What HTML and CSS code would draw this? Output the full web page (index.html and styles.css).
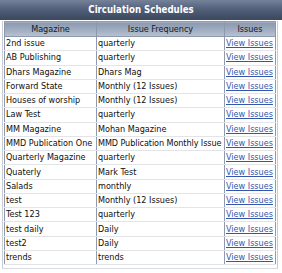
FILE: index.html
```html
<!DOCTYPE html>
<html>
<head>
<meta charset="utf-8">
<link rel="stylesheet" href="styles.css">
</head>
<body>
<div class="panel">
  <div class="title">Circulation Schedules</div>
  <div class="box">
    <table class="grid">
      <thead>
        <tr><th class="c1">Magazine</th><th class="c2">Issue Frequency</th><th class="c3">Issues</th></tr>
      </thead>
      <tbody>
        <tr><td>2nd issue</td><td>quarterly</td><td><a href="#">View Issues</a></td></tr>
        <tr><td>AB Publishing</td><td>quarterly</td><td><a href="#">View Issues</a></td></tr>
        <tr><td>Dhars Magazine</td><td>Dhars Mag</td><td><a href="#">View Issues</a></td></tr>
        <tr><td>Forward State</td><td>Monthly (12 Issues)</td><td><a href="#">View Issues</a></td></tr>
        <tr><td>Houses of worship</td><td>Monthly (12 Issues)</td><td><a href="#">View Issues</a></td></tr>
        <tr><td>Law Test</td><td>quarterly</td><td><a href="#">View Issues</a></td></tr>
        <tr><td>MM Magazine</td><td>Mohan Magazine</td><td><a href="#">View Issues</a></td></tr>
        <tr><td>MMD Publication One</td><td class="tight">MMD Publication Monthly Issue</td><td><a href="#">View Issues</a></td></tr>
        <tr><td>Quarterly Magazine</td><td>quarterly</td><td><a href="#">View Issues</a></td></tr>
        <tr><td>Quaterly</td><td>Mark Test</td><td><a href="#">View Issues</a></td></tr>
        <tr><td>Salads</td><td>monthly</td><td><a href="#">View Issues</a></td></tr>
        <tr><td>test</td><td>Monthly (12 Issues)</td><td><a href="#">View Issues</a></td></tr>
        <tr><td>Test 123</td><td>quarterly</td><td><a href="#">View Issues</a></td></tr>
        <tr><td>test daily</td><td>Daily</td><td><a href="#">View Issues</a></td></tr>
        <tr><td>test2</td><td>Daily</td><td><a href="#">View Issues</a></td></tr>
        <tr><td>trends</td><td>trends</td><td><a href="#">View Issues</a></td></tr>
      </tbody>
    </table>
  </div>
</div>
</body>
</html>
```
FILE: styles.css
```css
html, body {
  margin: 0;
  padding: 0;
  background: #ffffff;
}
.panel {
  width: 282px;
  font-family: "DejaVu Sans Condensed", "DejaVu Sans", sans-serif;
}
.title {
  height: 20px;
  line-height: 20px;
  text-align: center;
  color: #ffffff;
  font-weight: bold;
  font-size: 9.6px;
  background: linear-gradient(#75829a, #52607a 45%, #3a475e);
}
.box {
  margin: 1px 4px 0 2px;
  border-left: 1px solid #c8ccd4;
  border-right: 1px solid #c8ccd4;
  border-bottom: 1px solid #d8dce2;
  height: 247px;
  padding-left: 1px;
}
.grid {
  border-collapse: collapse;
  width: 272px;
  table-layout: fixed;
  font-size: 9px;
  color: #0e0e0e;
}
.grid th {
  height: 14px;
  padding: 0;
  font-weight: normal;
  color: #151a22;
  background: linear-gradient(#8a98af, #a3afc2 60%, #b9c3d2);
  border: 1px solid #8d99ad;
  text-align: center;
}
.c1 { width: 91px; }
.c2 { width: 127px; }
.c3 { width: 50px; }
.grid td {
  height: 13.27px;
  padding: 0 0 0 1px;
  border-left: 1px solid #8e9ab0;
  border-right: 1px solid #8e9ab0;
  border-bottom: 1px solid #e2e4e8;
  white-space: nowrap;
  overflow: hidden;
  line-height: 13px;
}
.grid td.tight {
  letter-spacing: -0.08px;
}
.grid td a {
  color: #3456ac;
  text-decoration: underline;
}
```
